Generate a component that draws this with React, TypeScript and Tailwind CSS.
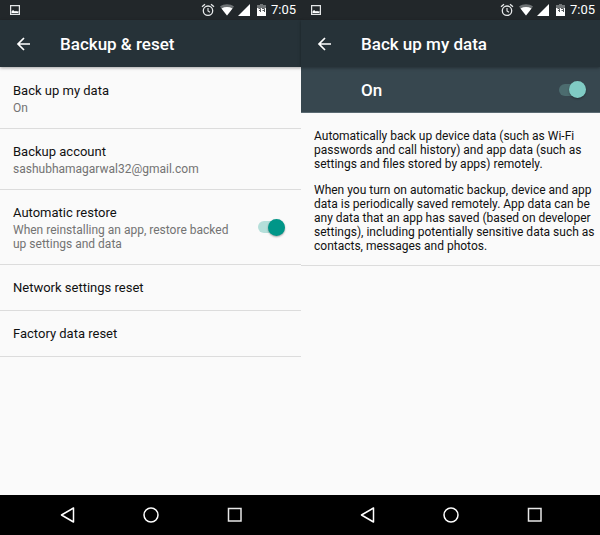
import { ReactNode, useState } from "react";

const StatusBar = () => {
  return (
    <div className="flex h-5 items-center bg-[#22272a] pr-[5px] pl-2.5 text-white">
      <svg className="h-3 w-3" viewBox="0 0 12 12" aria-label="Screenshot saved">
        <path
          d="M.6 1.600h8.800v8.800H.6z"
          fill="none"
          stroke="#e4e6e7"
          strokeWidth="1.200"
        />
        <path d="M1.500 9V7.500l1.500-1.500 2 1.500 1-.7 1 .7 1.500-.5v2z" fill="#fff" />
      </svg>
      <div className="ml-auto flex items-center">
        <svg className="h-[14px] w-[14px]" viewBox="0 0 14 14" aria-label="Alarm set">
          <g fill="none" stroke="#e8eaeb" strokeWidth="1.300">
            <circle cx="7" cy="7.700" r="4.700" />
            <path d="M7 5v3l2 1.300" strokeWidth="1.100" />
            <path d="M1 3.800 4 1.300M10 1.300l3 2.500" />
          </g>
        </svg>
        <svg className="ml-[5px] h-3 w-[14px]" viewBox="0 0 14 12" aria-label="Wi-Fi">
          <path d="M0 2.500C4 -.4 10 -.4 14 2.500L7 11.500z" fill="#6f7375" />
          <path d="M1.500 4.400C5 2.500 9 2.500 12.500 4.400L7 11.500z" fill="#fff" />
        </svg>
        <svg className="ml-1 h-3 w-3" viewBox="0 0 12 12" aria-label="Mobile signal">
          <path d="M12 0v12H0z" fill="#fff" />
        </svg>
        <svg className="ml-[7px] h-3 w-[9px]" viewBox="0 0 9 12" aria-label="Battery">
          <path d="M3 0h3v1h3v3H0V1h3z" fill="#6f7375" />
          <path d="M0 4h9v8H0z" fill="#fff" />
          <path
            d="M1.500 4.500h2V8M2 6.500h1.500M5 4.500h2.500V8M5.500 6.500h2"
            fill="none"
            stroke="#55595b"
            strokeWidth="1"
          />
        </svg>
        <span className="ml-[5px] text-[13px] leading-5">7:05</span>
      </div>
    </div>
  );
};

const AppBar = ({ title }: { title: string }) => {
  return (
    <header className="relative flex h-[47px] items-center bg-[#263238] pl-4 text-white shadow-[0_1px_3px_rgba(0,0,0,0.35)]">
      <button type="button" aria-label="Navigate up">
        <svg className="h-4 w-4" viewBox="0 0 16 16">
          <path
            d="M14 8H2.500M8 2 2 8l6 6"
            fill="none"
            stroke="#fff"
            strokeWidth="1.700"
          />
        </svg>
      </button>
      <h1 className="ml-7 text-[17px] leading-6 font-medium">{title}</h1>
    </header>
  );
};

const NavBar = () => {
  return (
    <nav className="flex h-10 items-center justify-center gap-[60px] bg-black">
      <button type="button" aria-label="Back">
        <svg className="h-6 w-6" viewBox="0 0 24 24">
          <path
            d="M18.500 5v14L6.500 12z"
            fill="none"
            stroke="#fff"
            strokeWidth="1.500"
            strokeLinejoin="round"
          />
        </svg>
      </button>
      <button type="button" aria-label="Home">
        <svg className="h-6 w-6" viewBox="0 0 24 24">
          <circle cx="12" cy="12" r="7" fill="none" stroke="#fff" strokeWidth="1.500" />
        </svg>
      </button>
      <button type="button" aria-label="Recent apps">
        <svg className="h-6 w-6" viewBox="0 0 24 24">
          <path d="M5.500 5.500h12.500v12.500H5.500z" fill="none" stroke="#e8e8e8" strokeWidth="1.500" />
        </svg>
      </button>
    </nav>
  );
};

interface SwitchProps {
  id: string;
  dark?: boolean;
}

const Switch = ({ id, dark }: SwitchProps) => {
  const [checked, setChecked] = useState(true);
  const track = dark ? "bg-[#4c6c6f]" : "bg-[#b5dfda]";
  const thumb = dark ? "before:bg-[#80cbc4]" : "before:bg-[#009688]";
  return (
    <input
      id={id}
      type="checkbox"
      role="switch"
      checked={checked}
      onChange={(e) => setChecked(e.target.checked)}
      className={`flex h-3 w-[27px] shrink-0 appearance-none items-center rounded-full before:size-[17px] before:shrink-0 before:rounded-full before:shadow-[0_1px_2px_rgba(0,0,0,0.35)] checked:justify-end ${track} ${thumb}`}
    />
  );
};

interface RowTextProps {
  title: string;
  children?: ReactNode;
}

const RowText = ({ title, children }: RowTextProps) => {
  return (
    <>
      <span className="block text-[13px] leading-[19px] text-[#111]">{title}</span>
      {children && (
        <span className="mt-px block text-[12px] leading-[14px] text-[#737373]">
          {children}
        </span>
      )}
    </>
  );
};

const Row = ({ title, children }: RowTextProps) => {
  return (
    <li className="border-b border-[#dcdcdc]">
      <button type="button" className="block w-full p-[13px] text-left">
        <RowText title={title}>{children}</RowText>
      </button>
    </li>
  );
};

const Screen = ({ title, children }: { title: string; children: ReactNode }) => {
  return (
    <section className="flex min-w-0 flex-col bg-[#fafafa]">
      <StatusBar />
      <AppBar title={title} />
      <main className="flex-1">{children}</main>
      <NavBar />
    </section>
  );
};

const App = () => {
  return (
    <div className="grid min-h-screen grid-cols-[301fr_299fr] font-['Roboto',sans-serif]">
      <Screen title="Backup &amp; reset">
        <ul className="pt-px">
          <Row title="Back up my data">On</Row>
          <Row title="Backup account">sashubhamagarwal32@gmail.com</Row>
          <li className="flex items-center border-b border-[#dcdcdc] py-[13px] pr-4 pl-[13px]">
            <label htmlFor="auto-restore" className="flex-1 pr-6">
              <RowText title="Automatic restore">
                When reinstalling an app, restore backed up settings and data
              </RowText>
            </label>
            <Switch id="auto-restore" />
          </li>
          <Row title="Network settings reset" />
          <Row title="Factory data reset" />
        </ul>
      </Screen>
      <Screen title="Back up my data">
        <div className="flex h-[46px] items-center justify-between border-b border-[#5a6a72] bg-[#37474f] pr-3.5 pl-[60px]">
          <label htmlFor="backup" className="text-[17px] leading-6 font-medium text-white">
            On
          </label>
          <Switch id="backup" dark />
        </div>
        <div className="space-y-3 border-b border-[#dcdcdc] pt-4 pr-1 pb-3 pl-[13px] text-[12px] leading-[14px] text-[#111]">
          <p>
            Automatically back up device data (such as Wi-Fi passwords and call
            history) and app data (such as settings and files stored by apps)
            remotely.
          </p>
          <p>
            When you turn on automatic backup, device and app data is periodically
            saved remotely. App data can be any data that an app has saved (based
            on developer settings), including potentially sensitive data such as
            contacts, messages and photos.
          </p>
        </div>
      </Screen>
    </div>
  );
};

export default App;
